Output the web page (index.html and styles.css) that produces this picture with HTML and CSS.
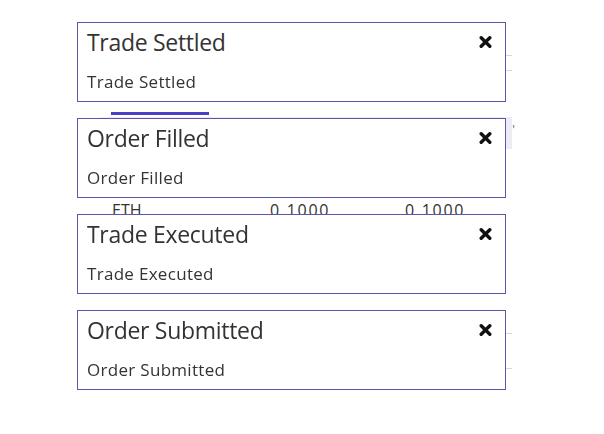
FILE: index.html
```html
<!DOCTYPE html>
<html>
<head>
<meta charset="utf-8">
<link rel="stylesheet" href="styles.css">
</head>
<body>
<div class="page">
  <div class="form">
    <div class="rule"></div>
    <div class="rule"></div>
  </div>
  <div class="tabs"><div class="tab-active"></div></div>
  <div class="thead"><span class="th-mark">'</span></div>
  <div class="trow">
    <span class="c-asset">ETH</span>
    <span class="c-num">0.1000</span>
    <span class="c-num">0.1000</span>
  </div>
  <div class="lower">
    <div class="rule tall"></div>
    <div class="rule"></div>
  </div>
</div>

<div class="toasts">
  <div class="toast">
    <div class="toast-head">
      <span class="toast-title">Trade Settled</span>
      <svg class="close" width="13" height="12" viewBox="0 0 13 12"><path d="M2.2 1.8 L10.8 10.2 M10.8 1.8 L2.2 10.2" stroke="#111" stroke-width="3.4" stroke-linecap="round"/></svg>
    </div>
    <div class="toast-body">Trade Settled</div>
  </div>
  <div class="toast">
    <div class="toast-head">
      <span class="toast-title">Order Filled</span>
      <svg class="close" width="13" height="12" viewBox="0 0 13 12"><path d="M2.2 1.8 L10.8 10.2 M10.8 1.8 L2.2 10.2" stroke="#111" stroke-width="3.4" stroke-linecap="round"/></svg>
    </div>
    <div class="toast-body">Order Filled</div>
  </div>
  <div class="toast">
    <div class="toast-head">
      <span class="toast-title">Trade Executed</span>
      <svg class="close" width="13" height="12" viewBox="0 0 13 12"><path d="M2.2 1.8 L10.8 10.2 M10.8 1.8 L2.2 10.2" stroke="#111" stroke-width="3.4" stroke-linecap="round"/></svg>
    </div>
    <div class="toast-body">Trade Executed</div>
  </div>
  <div class="toast">
    <div class="toast-head">
      <span class="toast-title">Order Submitted</span>
      <svg class="close" width="13" height="12" viewBox="0 0 13 12"><path d="M2.2 1.8 L10.8 10.2 M10.8 1.8 L2.2 10.2" stroke="#111" stroke-width="3.4" stroke-linecap="round"/></svg>
    </div>
    <div class="toast-body">Order Submitted</div>
  </div>
</div>
</body>
</html>
```

FILE: styles.css
```css
html, body {
  margin: 0;
  padding: 0;
  background: #fff;
}
body {
  font-family: "Open Sans", "Noto Sans", sans-serif;
  color: #333;
}
.page {
  margin-left: 100px;
  width: 412px;
  padding-top: 55px;
}
.rule {
  border-top: 1px solid #d6d6de;
  height: 14px;
}
.tabs {
  height: 30px;
}
.tab-active {
  margin-left: 11px;
  width: 98px;
  height: 27px;
  border-bottom: 3px solid #4b3fc8;
}
.thead {
  margin-top: 2px;
  height: 32px;
  background: #ececf7;
  position: relative;
}
.th-mark {
  position: absolute;
  right: -3px;
  top: 4px;
  font-size: 12px;
  color: #666;
}
.trow {
  display: flex;
  align-items: center;
  height: 30px;
  padding-top: 46px;
  font-size: 16px;
  color: #333;
}
.c-asset {
  box-sizing: border-box;
  flex: none;
  width: 170px;
  padding-left: 12px;
}
.c-num {
  box-sizing: border-box;
  flex: none;
  width: 135px;
  letter-spacing: 1.7px;
}
.lower {
  padding-top: 108px;
}
.rule.tall {
  height: 34px;
}
.toasts {
  position: fixed;
  left: 77px;
  top: 22px;
  width: 429px;
  display: flex;
  flex-direction: column;
  gap: 16px;
}
.toast {
  box-sizing: border-box;
  height: 80px;
  border: 1px solid #5e55a6;
  background: #fff;
  padding: 0 13px 0 9px;
  display: flex;
  flex-direction: column;
}
.toast-head {
  display: flex;
  align-items: center;
  justify-content: space-between;
  height: 38px;
}
.toast-title {
  font-size: 23px;
  color: #333;
  letter-spacing: -0.3px;
}
.close {
  display: block;
}
.toast-body {
  font-size: 17px;
  color: #333;
  margin-top: 9px;
  letter-spacing: 0.3px;
}
```
